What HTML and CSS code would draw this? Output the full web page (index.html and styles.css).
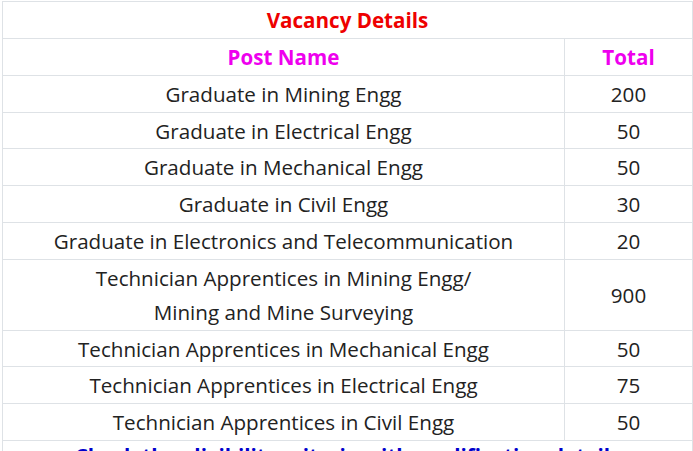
FILE: index.html
```html
<!DOCTYPE html>
<html>
<head>
<meta charset="utf-8">
<link rel="stylesheet" href="styles.css">
</head>
<body>
<table class="vacancy">
  <tr><th colspan="2" class="title">Vacancy Details</th></tr>
  <tr><th class="head">Post Name</th><th class="head col-total">Total</th></tr>
  <tr><td>Graduate in Mining Engg</td><td>200</td></tr>
  <tr><td>Graduate in Electrical Engg</td><td>50</td></tr>
  <tr><td>Graduate in Mechanical Engg</td><td>50</td></tr>
  <tr><td>Graduate in Civil Engg</td><td>30</td></tr>
  <tr><td>Graduate in Electronics and Telecommunication</td><td>20</td></tr>
  <tr><td>Technician Apprentices in Mining Engg/<br>Mining and Mine Surveying</td><td>900</td></tr>
  <tr><td>Technician Apprentices in Mechanical Engg</td><td>50</td></tr>
  <tr><td>Technician Apprentices in Electrical Engg</td><td>75</td></tr>
  <tr><td>Technician Apprentices in Civil Engg</td><td>50</td></tr>
  <tr><td colspan="2" class="note">Check the eligibility criteria with qualification details</td></tr>
</table>
</body>
</html>
```
FILE: styles.css
```css
html, body {
  margin: 0;
  padding: 0;
  background: #fff;
}
body {
  padding: 1px 0 0 2px;
  font-family: "Open Sans", "Noto Sans", sans-serif;
  color: #222;
}
.vacancy {
  border-collapse: collapse;
  width: 691px;
  font-size: 20.6px;
}
.vacancy th, .vacancy td {
  border: 1px solid #dee2e6;
  text-align: center;
  padding: 2px 8px 0;
  line-height: 33.85px;
}
.vacancy td:first-child, .vacancy th.head:first-child {
  width: 545px;
}
.title {
  color: #ee0000;
  font-weight: 700;
}
.head {
  color: #ee00ee;
  font-weight: 700;
}
.vacancy td.note {
  color: #0000cc;
  font-weight: 700;
  padding-top: 0;
  line-height: 30px;
}
```
